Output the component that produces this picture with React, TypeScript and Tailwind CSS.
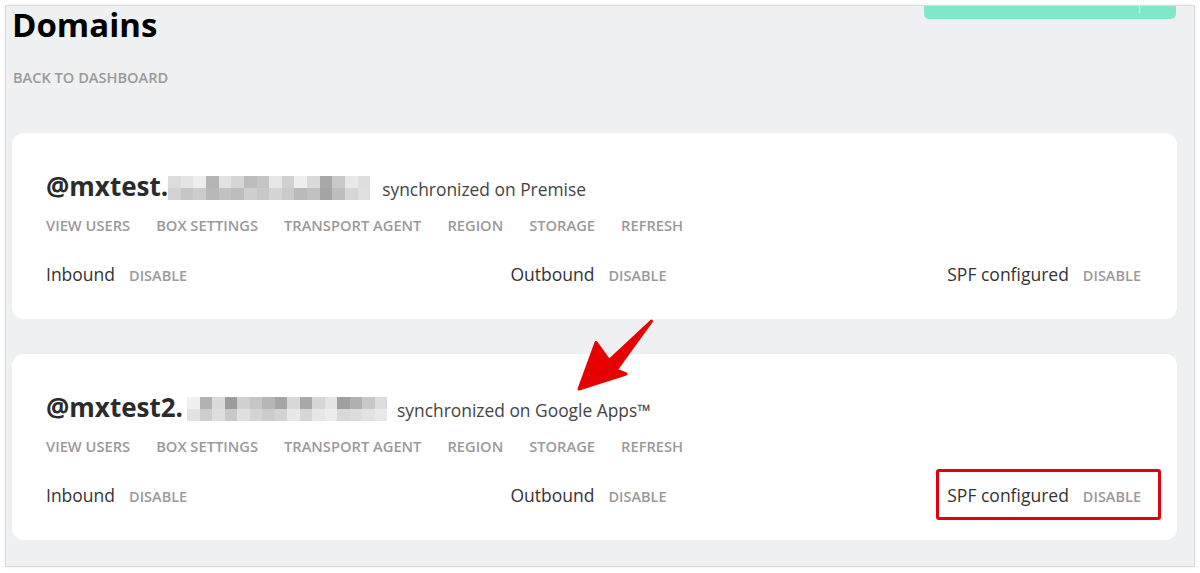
import React from "react";

const blur1 = [
  ["bg-[#dcdcdc]", "bg-[#e4e4e4]", "bg-[#eeeeee]", "bg-[#b4b4b4]", "bg-[#e2e2e2]", "bg-[#d6d6d6]", "bg-[#bcbcbc]", "bg-[#c4c4c4]", "bg-[#e6e6e6]", "bg-[#d0d0d0]", "bg-[#eeeeee]", "bg-[#dadada]", "bg-[#a8a8a8]", "bg-[#c8c8c8]", "bg-[#e8e8e8]", "bg-[#dedede]"],
  ["bg-[#d2d2d2]", "bg-[#c6c6c6]", "bg-[#cccccc]", "bg-[#b8b8b8]", "bg-[#c2c2c2]", "bg-[#bdbdbd]", "bg-[#cfcfcf]", "bg-[#c8c8c8]", "bg-[#d4d4d4]", "bg-[#cacaca]", "bg-[#bababa]", "bg-[#c0c0c0]", "bg-[#a4a4a4]", "bg-[#bdbdbd]", "bg-[#d6d6d6]", "bg-[#e0e0e0]"],
];
const blur2 = [
  ["bg-[#f0f0f0]", "bg-[#b2b2b2]", "bg-[#dadada]", "bg-[#9c9c9c]", "bg-[#d0d0d0]", "bg-[#c6c6c6]", "bg-[#b6b6b6]", "bg-[#a6a6a6]", "bg-[#d8d8d8]", "bg-[#a8a8a8]", "bg-[#d6d6d6]", "bg-[#e4e4e4]", "bg-[#a0a0a0]", "bg-[#b0b0b0]", "bg-[#c8c8c8]", "bg-[#dcdcdc]"],
  ["bg-[#e2e2e2]", "bg-[#cecece]", "bg-[#dedede]", "bg-[#c8c8c8]", "bg-[#e0e0e0]", "bg-[#d4d4d4]", "bg-[#cbcbcb]", "bg-[#d2d2d2]", "bg-[#e8e8e8]", "bg-[#d6d6d6]", "bg-[#e6e6e6]", "bg-[#ececec]", "bg-[#d8d8d8]", "bg-[#dcdcdc]", "bg-[#e2e2e2]", "bg-[#e8e8e8]"],
];

function Blur({ rows, w }: { rows: string[][]; w: string }) {
  return (
    <div className={`self-center flex flex-col h-[24px] ${w}`}>
      {rows.map((r, i) => (
        <div key={i} className="flex flex-1">
          {r.map((c, j) => (
            <div key={j} className={`flex-1 ${c}`} />
          ))}
        </div>
      ))}
    </div>
  );
}

const links = ["VIEW USERS", "BOX SETTINGS", "TRANSPORT AGENT", "REGION", "STORAGE", "REFRESH"];

function Status({ label }: { label: string }) {
  return (
    <div className="flex items-baseline">
      <span className="text-[17.5px] leading-[24px] text-[#333333]">{label}</span>
      <span className="ml-[14px] text-[14.5px] leading-[24px] font-semibold text-[#9a9a9a]">DISABLE</span>
    </div>
  );
}

function Card({ name, sync, blur, blurW, gap }: { name: string; sync: string; blur: string[][]; blurW: string; gap: string }) {
  return (
    <div className="bg-white rounded-[12px] pl-[34px] pr-[36px] pt-[37px] pb-[31px]">
      <div className="flex items-baseline">
        <span className="text-[26px] leading-[32px] font-bold text-[#2b2b2b]">{name}</span>
        <Blur rows={blur} w={blurW} />
        <span className={`${gap} text-[17.4px] leading-[32px] text-[#444444]`}>{sync}</span>
      </div>
      <div className="mt-[10px] flex gap-[26px]">
        {links.map((l) => (
          <span key={l} className="text-[14.7px] leading-[20px] font-semibold text-[#9a9a9a]">
            {l}
          </span>
        ))}
      </div>
      <div className="mt-[27px] grid grid-cols-3">
        <div className="justify-self-start">
          <Status label="Inbound" />
        </div>
        <div className="justify-self-center mr-[10px]">
          <Status label="Outbound" />
        </div>
        <div className="justify-self-end">
          <Status label="SPF configured" />
        </div>
      </div>
    </div>
  );
}

export default function App() {
  return (
    <div className="relative w-[1200px] h-[573px] bg-white p-[5px] overflow-hidden font-['Open_Sans',sans-serif]">
      <div className="h-[562px] border border-[#dadada] bg-[#eef0f1] shadow-[0_0_3px_rgba(0,0,0,0.08)] pl-[6px] pr-[17px] overflow-hidden">
        <div className="flex justify-between items-start">
          <h1 className="text-[33px] leading-[38px] font-bold text-black">Domains</h1>
          <div className="mr-[1px] w-[252px] h-[13px] bg-[#80e8ca] rounded-b-[5px] flex justify-end">
            <div className="mr-[36px] w-px h-[7px] bg-white/70" />
          </div>
        </div>
        <div className="mt-[23px] pl-[1px] text-[14.6px] leading-[20px] font-semibold text-[#9a9a9a]">BACK TO DASHBOARD</div>
        <div className="mt-[46px] flex flex-col gap-[35px]">
          <Card name="@mxtest." sync="synchronized on Premise" blur={blur1} blurW="w-[202px]" gap="ml-[12px]" />
          <Card name="@mxtest2." sync="synchronized on Google Apps™" blur={blur2} blurW="w-[200px] ml-[4px]" gap="ml-[10px]" />
        </div>
      </div>

      {/* annotation: red box */}
      <div className="absolute left-[936px] top-[469px] w-[225px] h-[51px] border-[3px] border-[#e0000f] rounded-[3px]" />

      {/* annotation: red arrow */}
      <svg className="absolute left-[560px] top-[310px]" width="110" height="90" viewBox="560 310 110 90">
        <polygon
          points="579,389 596,342.5 609,360.5 651.5,321 616,370 626,374"
          fill="#e60000"
          stroke="#e60000"
          strokeWidth="3"
          strokeLinejoin="round"
        />
      </svg>
    </div>
  );
}
